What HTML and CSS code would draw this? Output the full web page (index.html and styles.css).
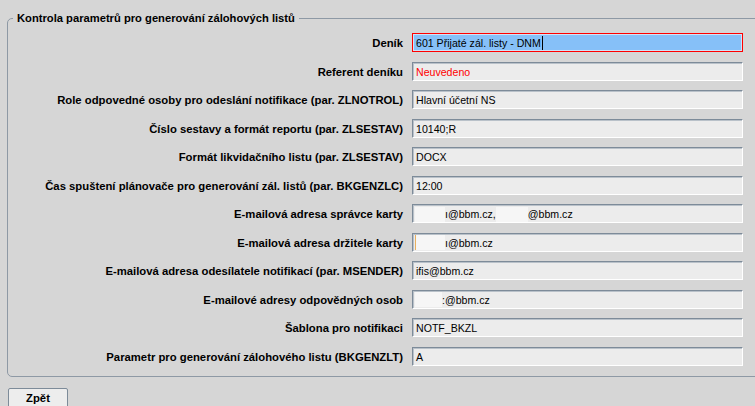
FILE: index.html
```html
<!DOCTYPE html>
<html lang="cs">
<head>
<meta charset="utf-8">
<title>Kontrola parametrů</title>
<link rel="stylesheet" href="styles.css">
</head>
<body>
<fieldset class="panel">
  <legend class="panel-title">Kontrola parametrů pro generování zálohových listů</legend>
  <div class="form">
    <label class="lbl">Deník</label>
    <div class="field field-active">601 Přijaté zál. listy - DNM<span class="caret"></span></div>

    <label class="lbl">Referent deníku</label>
    <div class="field field-red">Neuvedeno</div>

    <label class="lbl">Role odpovedné osoby pro odeslání notifikace (par. ZLNOTROL)</label>
    <div class="field">Hlavní účetní NS</div>

    <label class="lbl">Číslo sestavy a formát reportu (par. ZLSESTAV)</label>
    <div class="field">10140;R</div>

    <label class="lbl">Formát likvidačního listu (par. ZLSESTAV)</label>
    <div class="field">DOCX</div>

    <label class="lbl">Čas spuštení plánovače pro generování zál. listů (par. BKGENZLC)</label>
    <div class="field">12:00</div>

    <label class="lbl">E-mailová adresa správce karty</label>
    <div class="field"><span class="mask m30"></span>ı@bbm.cz,<span class="mask m32"></span>@bbm.cz</div>

    <label class="lbl">E-mailová adresa držitele karty</label>
    <div class="field"><span class="mask m30 mark"></span>ı@bbm.cz</div>

    <label class="lbl">E-mailová adresa odesílatele notifikací (par. MSENDER)</label>
    <div class="field">ifis@bbm.cz</div>

    <label class="lbl">E-mailové adresy odpovědných osob</label>
    <div class="field"><span class="mask m27"></span>:@bbm.cz</div>

    <label class="lbl">Šablona pro notifikaci</label>
    <div class="field">NOTF_BKZL</div>

    <label class="lbl">Parametr pro generování zálohového listu (BKGENZLT)</label>
    <div class="field">A</div>
  </div>
</fieldset>
<div class="actions">
  <button class="btn" type="button">Zpět</button>
</div>
</body>
</html>
```
FILE: styles.css
```css
html, body {
  margin: 0;
  padding: 0;
}
body {
  width: 755px;
  height: 406px;
  overflow: hidden;
  background: #d6d6d6;
  font-family: "Liberation Sans", Arial, sans-serif;
  font-size: 11px;
  color: #000;
}
.panel {
  margin: 11px 0 0 7px;
  width: 770px;
  box-sizing: border-box;
  border: 1px solid #8e99a5;
  border-radius: 5px;
  padding: 0 0 10px 0;
}
.panel-title {
  margin-left: 5px;
  padding: 0 4px;
  font-weight: bold;
  font-size: 11.2px;
  line-height: 14px;
}
.form {
  display: grid;
  grid-template-columns: 395px 331px;
  column-gap: 9px;
  grid-auto-rows: 19px;
  row-gap: 9.5px;
  padding-top: 8px;
}
.lbl {
  font-weight: bold;
  font-size: 11.3px;
  text-align: right;
  line-height: 19px;
  padding-top: 1px;
  white-space: nowrap;
}
.field {
  box-sizing: border-box;
  height: 19px;
  background: #ececec;
  border: 1px solid #fff;
  border-top-color: #7d8b99;
  border-left-color: #7d8b99;
  box-shadow: inset 1px 1px 0 #b9c1c9;
  padding: 1px 0 0 3px;
  font-size: 10.6px;
  line-height: 16px;
  white-space: nowrap;
  display: flex;
  align-items: center;
}
.field-active {
  border: 1px solid #ff0000;
  background: #86c0f8;
  box-shadow: inset 0 0 0 1px #cfe3f7;
}
.caret {
  display: inline-block;
  width: 1px;
  height: 14px;
  background: #000;
  margin-left: 1px;
}
.field-red {
  color: #ff0000;
}
.mask {
  display: inline-block;
  height: 15px;
  background: #f6f6f6;
}
.m30 { width: 30px; margin-left: -1px; }
.m32 { width: 32px; }
.m27 { width: 27px; margin-left: -1px; }
.mark { border-left: 1px solid #e8b060; box-sizing: border-box; }
.actions {
  padding: 11px 0 0 8px;
}
.btn {
  width: 60px;
  height: 21px;
  box-sizing: border-box;
  background: #ededed;
  border: 1px solid #7d8b99;
  border-radius: 2px;
  font-family: "Liberation Sans", Arial, sans-serif;
  font-weight: bold;
  font-size: 11.3px;
  color: #000;
  padding: 0;
}
```
